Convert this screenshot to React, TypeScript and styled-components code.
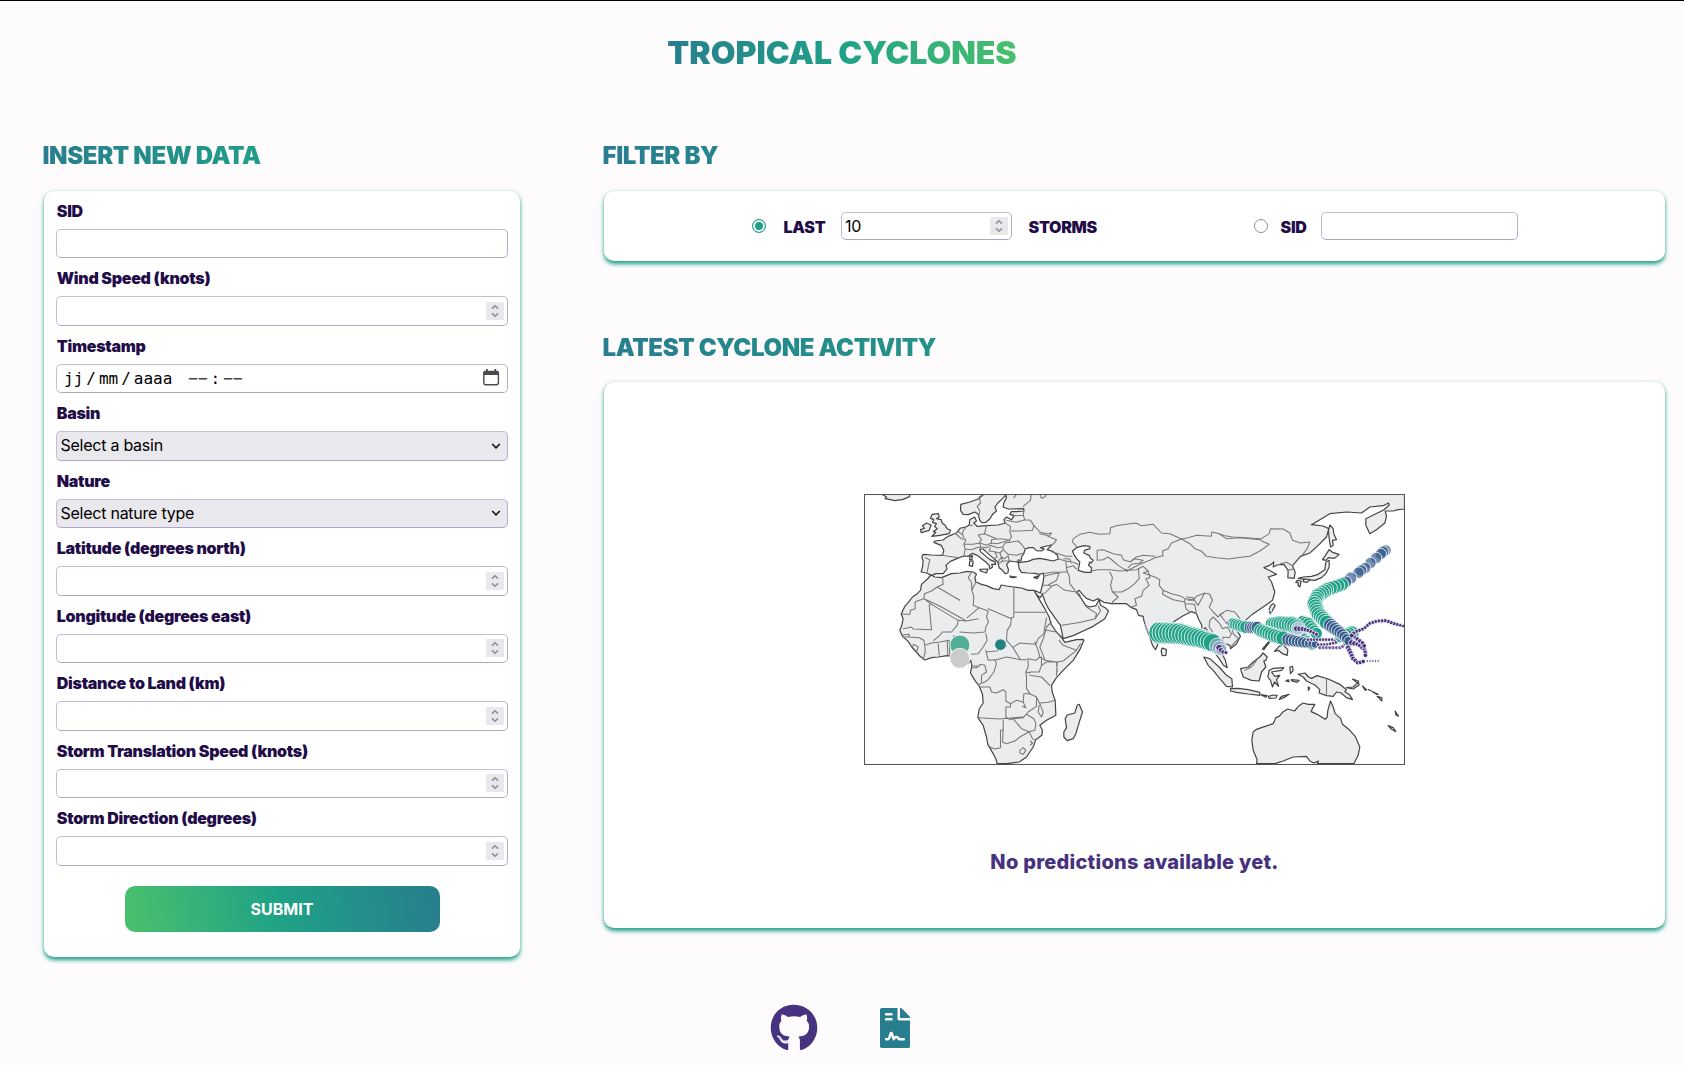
import React from 'react';
import styled, { createGlobalStyle } from 'styled-components';
import { FaGithub, FaFileContract } from 'react-icons/fa';

const GlobalStyle = createGlobalStyle`
  *, *::before, *::after { box-sizing: border-box; }
  body {
    margin: 0;
    background: #fdfbfc;
    color: #1f0c48;
    font-family: Inter, "Liberation Sans", sans-serif;
  }
  h1, h2, p { margin: 0; }
`;

const Page = styled.div`
  height: 1065px;
  overflow: hidden;
  border-top: 1px solid #000;
  display: flex;
  flex-direction: column;
`;

const Header = styled.header`
  display: flex;
  justify-content: center;
  padding-top: 32px;
  height: 138px;
`;

const Title = styled.h1`
  font-size: 32px;
  line-height: 40px;
  height: 40px;
  font-weight: 900;
  letter-spacing: -0.03px;
  white-space: nowrap;
  background: linear-gradient(80deg, #287d8e, #1fa187, #4ac16d);
  background-clip: text;
  -webkit-background-clip: text;
  color: transparent;
`;

const Heading = styled.h2`
  font-size: 24px;
  line-height: 34px;
  font-weight: 900;
  letter-spacing: -0.37px;
  margin-left: -1.5px;
  background: linear-gradient(80deg, #287d8e, #1fa187, #4ac16d);
  background-clip: text;
  -webkit-background-clip: text;
  color: transparent;
`;

const Main = styled.main`
  display: grid;
  grid-template-columns: 476px 1061px;
  column-gap: 84px;
  padding-left: 44px;
  height: 865px;
  align-items: start;
`;

const Column = styled.div`
  display: flex;
  flex-direction: column;
`;

const Card = styled.section<{ $h: number }>`
  height: ${(p) => p.$h}px;
  margin-top: 18px;
  background: #fff;
  border-radius: 10px;
  box-shadow: 0 2.5px 4px 0 #1fa187;
`;

const Form = styled.form`
  display: flex;
  flex-direction: column;
  gap: 8px;
  padding: 7.5px 12px 0;
`;

const Field = styled.label`
  display: flex;
  flex-direction: column;
  gap: 6px;
`;

const Label = styled.span`
  font-size: 16px;
  line-height: 24px;
  font-weight: 900;
  letter-spacing: -0.28px;
  white-space: nowrap;
  padding-left: 0.8px;
`;

const Control = styled.span<{ $w?: number; $fill?: string; $h?: number }>`
  display: flex;
  align-items: center;
  width: ${(p) => (p.$w ? `${p.$w}px` : '100%')};
  height: ${(p) => p.$h ?? 29.5}px;
  padding: 0 3px;
  border: 1px solid #c3bdd8;
  border-right-color: #b3acce;
  border-bottom-color: #aea6ca;
  border-radius: 5px;
  background: ${(p) => p.$fill ?? '#fff'};
  color: #000;
`;

const Input = styled.input`
  appearance: textfield;
  flex: 1;
  min-width: 0;
  padding: 0;
  border: 0;
  outline: 0;
  background: transparent;
  font: 400 16px Inter, "Liberation Sans", sans-serif;
  letter-spacing: -0.3px;
  color: #000;
  &::-webkit-inner-spin-button { appearance: none; }
`;

const Choice = styled.span`
  flex: 1;
  font-size: 16px;
  letter-spacing: -0.25px;
  margin: -1px 0 0 0.5px;
`;

const SpinBox = styled.span`
  display: grid;
  place-items: center;
  width: 18px;
  height: 18px;
  background: #e9e8ed;
`;

const DateText = styled.span`
  flex: 1;
  display: flex;
  align-items: center;
  padding-left: 4px;
  font: 16px "DejaVu Sans Mono", monospace;
  white-space: pre;
`;

const DatePart = styled.span<{ $ml?: number }>`
  margin-left: ${(p) => p.$ml ?? 0}px;
`;

const Dashes = styled(DatePart)`
  color: #444;
`;

const CalendarIcon = styled.svg`
  width: 18px;
  height: 18px;
  margin: -3px 4px 0 0;
`;

const ChevronIcon = styled.svg`
  width: 10px;
  height: 8px;
  margin-right: 3px;
`;

const Submit = styled.button`
  align-self: center;
  width: 315px;
  height: 46px;
  margin-top: 12px;
  border: 0;
  border-radius: 10px;
  background: linear-gradient(80deg, #4ac16d, #1fa187, #287d8e);
  color: #fff;
  font: 700 16px Inter, "Liberation Sans", sans-serif;
  letter-spacing: 0;
`;

const FilterRow = styled.div`
  display: flex;
  align-items: center;
  height: 70px;
  padding-left: 147.5px;
`;

const Radio = styled.span<{ $on?: boolean }>`
  width: 14px;
  height: 14px;
  border-radius: 50%;
  border: 1px solid ${(p) => (p.$on ? '#1fa187' : '#8f8f9d')};
  background: ${(p) => (p.$on ? '#1fa187' : '#fff')};
  box-shadow: inset 0 0 0 2px #fff;
`;

const FilterLabel = styled(Label)<{ $ml: number; $w: number }>`
  margin-left: ${(p) => p.$ml}px;
  width: ${(p) => p.$w}px;
  padding: 1px 0 0;
`;

const MapHeading = styled(Heading)`
  margin-top: 70px;
  margin-bottom: -1px;
`;

const MapPanel = styled.div`
  display: flex;
  flex-direction: column;
  align-items: center;
  padding-top: 112px;
  gap: 85px;
`;

const MapSvg = styled.svg`
  display: block;
  width: 541px;
  height: 271px;
`;

const Empty = styled.p`
  font-size: 20px;
  line-height: 24px;
  font-weight: 800;
  letter-spacing: 0.25px;
  color: #46327e;
`;

const Footer = styled.footer`
  display: flex;
  align-items: center;
  gap: 57px;
  padding-left: 770px;
  height: 48px;
`;

const Spin = () => (
  <SpinBox>
    <svg width="8" height="14" viewBox="0 0 8 14" fill="none" stroke="#8f8e9b" strokeWidth="1.5">
      <path d="M1 4.6 4 1.7 7 4.6M1 9.4l3 2.9 3-2.9" />
    </svg>
  </SpinBox>
);

const Calendar = () => (
  <CalendarIcon viewBox="0 0 18 18">
    <rect x="1.8" y="3.6" width="14.6" height="13.2" rx="2" fill="none" stroke="#4b4b4f" strokeWidth="1.4" />
    <path d="M1.2 7V4.5Q1.2 2.8 3 2.8h12.2q1.8 0 1.8 1.7V7zM4 1h1.8v3H4zM12.4 1h1.8v3h-1.8z" fill="#4b4b4f" />
  </CalendarIcon>
);

const Chevron = () => (
  <ChevronIcon viewBox="0 0 10 8" fill="none" stroke="#111" strokeWidth="1.6">
    <path d="M1.2 2 5 5.8 8.8 2" />
  </ChevronIcon>
);

/* Coastlines and borders are drawn at three map units per pixel. */
const MAINLAND =
  'M372 12 355 26 330 35 303 42 302 60 310 72 325 73 345 65 355 72 360 90 366 97 378 96 390 86 398 72 410 62 405 50 414 38 428 25 438 14 440 22 432 38 430 50 445 56 492 55 492 62 470 64 455 64 450 72 462 78 455 88 440 80 432 88 436 98 415 104 380 106 352 108 342 98 350 92 344 80 330 88 328 104 318 110 300 114 290 128 272 135 258 142 250 149 225 152 222 156 244 165 252 180 248 195 215 194 190 192 186 200 190 212 188 230 184 245 200 248 215 255 228 250 250 250 262 235 258 225 272 213 298 202 312 197 325 198 338 189 352 195 365 205 378 215 388 225 390 236 398 230 396 222 408 222 405 214 390 208 375 195 362 184 360 176 370 176 385 190 402 205 414 215 418 232 428 240 436 250 444 248 446 238 440 222 450 212 470 215 484 210 485 200 492 190 496 176 508 172 520 172 530 181 545 182 553 176 542 172 560 167 575 165 562 178 578 183 592 194 596 206 580 212 560 208 540 204 520 207 505 213 475 217 478 235 485 246 505 248 525 249 540 252 550 248 552 258 550 275 546 290 542 308 523 300 505 300 485 293 462 290 440 287 424 284 418 298 400 295 380 286 365 282 348 275 345 262 350 252 340 245 322 243 300 248 275 250 245 262 225 260 213 254 203 266 185 282 182 300 170 312 158 320 145 337 135 348 124 372 130 385 126 405 120 420 128 438 145 453 156 470 180 497 195 509 215 502 235 500 262 496 275 497 300 530 325 520 333 510 336 526 332 548 345 570 358 587 368 612 370 638 358 656 354 682 370 705 380 740 384 762 400 790 408 805 412 820 440 820 478 815 500 800 520 770 528 748 546 735 548 720 540 705 560 690 588 675 586 630 577 605 575 585 590 562 610 540 640 510 660 478 672 450 670 447 650 448 615 456 606 443 590 425 574 402 568 380 555 355 540 330 524 303 532 315 541 322 548 312 556 335 566 355 585 382 602 405 606 425 610 445 640 436 670 422 700 408 735 385 746 362 736 352 722 345 718 328 708 346 690 350 678 346 664 324 650 306 658 300 668 312 680 324 700 332 715 325 732 336 755 340 800 340 815 352 830 358 836 375 850 378 852 390 860 415 870 440 878 465 887 478 893 465 900 440 915 415 945 392 970 376 995 364 1010 370 1016 386 1026 405 1026 425 1036 412 1046 425 1060 440 1070 475 1068 492 1078 505 1090 524 1102 532 1096 508 1080 478 1084 455 1110 465 1112 475 1130 460 1142 438 1128 415 1118 400 1135 392 1150 396 1180 370 1210 350 1238 330 1245 305 1235 275 1225 260 1250 252 1232 242 1212 232 1230 225 1242 215 1240 230 1252 224 1272 222 1285 240 1284 262 1303 264 1306 246 1298 226 1322 198 1350 188 1375 165 1400 140 1407 115 1390 107 1355 103 1380 88 1410 70 1460 65 1505 68 1530 50 1570 46 1586 38 1588 45 1570 60 1545 72 1518 85 1518 105 1530 130 1550 118 1575 98 1580 78 1576 62 1600 62 1615 58 1634 56 1634 12Z';

const ISLANDS = [
  'M66 12 80 20 76 25 105 31 130 27 149 19 150 12Z',
  'M217 72 236 70 238 80 230 85 244 88 247 98 256 105 262 115 272 120 268 130 240 135 216 138 228 126 220 124 232 115 224 108 230 100 218 96 222 88 212 84Z',
  'M200 98 214 104 208 120 184 127 182 118 194 114 188 106Z',
  'M330 198 338 196 336 208 330 208ZM330 212 340 212 338 228 328 226Z',
  'M360 237 384 236 380 248 362 242ZM450 257 470 260 462 262 452 261ZM522 261 538 256 532 265Z',
  'M907 473 920 478 918 495 907 496 904 482Z',
  'M658 642 668 665 660 690 648 730 640 745 622 751 612 740 612 725 620 712 616 685 622 674 645 668 652 645Z',
  'M1032 500 1050 505 1078 530 1100 555 1116 565 1118 590 1100 588 1080 565 1060 540 1045 525Z',
  'M1112 595 1135 594 1165 598 1200 606 1200 615 1165 611 1130 606 1112 602Z',
  'M1142 535 1165 530 1180 515 1200 500 1210 488 1222 500 1218 510 1212 512 1218 530 1205 545 1198 572 1175 570 1150 560Z',
  'M1228 540 1240 534 1272 532 1265 540 1235 545 1245 558 1260 555 1250 568 1256 588 1244 575 1238 590 1232 570 1224 560Z',
  'M1203 613 1222 616 1218 621ZM1226 618 1240 614 1252 615 1248 623 1228 624ZM1258 627 1265 618 1288 612 1272 622Z',
  'M1278 572 1285 568 1288 574ZM1294 568 1318 570 1312 576 1296 572ZM1290 530 1298 528 1300 540 1292 550ZM1345 590 1350 593 1346 600Z',
  'M1315 552 1335 548 1346 560 1355 564 1372 556 1405 566 1440 582 1460 598 1455 604 1470 614 1478 628 1460 622 1444 608 1430 605 1420 618 1400 616 1378 608 1380 598 1365 584 1340 572 1330 560Z',
  'M1460 592 1480 590 1495 576 1498 584 1480 596ZM1478 566 1496 572 1496 580Z',
  'M1508 587 1520 598 1516 600ZM1525 598 1535 602ZM1538 604 1555 612 1550 612ZM1552 618 1566 622 1566 632ZM1606 662 1616 678 1608 674ZM1585 706 1600 712 1608 724 1594 716Z',
  'M1240 340 1246 346 1238 360 1232 372 1228 356 1234 344ZM1126 410 1140 405 1144 414 1132 420Z',
  'M1208 476 1230 450 1232 452 1212 478ZM1244 483 1258 468 1270 464 1284 478 1282 495 1268 490 1256 480Z',
  'M1222 402 1238 400 1242 420 1248 438 1236 432 1226 418Z',
  'M1315 264 1330 260 1355 258 1375 252 1395 238 1398 215 1408 210 1408 230 1398 250 1385 262 1365 270 1340 268Z',
  'M1312 270 1324 272 1320 290 1314 285 1316 278 1308 276ZM1332 266 1350 268 1342 276 1330 274Z',
  'M1388 208 1395 198 1408 178 1418 186 1438 192 1424 204 1406 202 1398 210Z',
  'M1410 104 1420 115 1422 130 1430 148 1418 150 1420 165 1412 170 1408 145 1406 120Z',
  'M1190 820 1192 808 1180 780 1176 750 1180 725 1190 717 1205 712 1240 700 1248 682 1258 678 1270 664 1284 656 1304 662 1318 646 1330 638 1345 642 1365 642 1358 654 1354 664 1372 672 1396 687 1402 680 1404 660 1412 632 1420 650 1426 670 1442 684 1448 702 1470 720 1486 738 1500 770 1495 795 1482 820 1372 820 1376 812 1362 818 1350 812 1340 798 1300 800 1270 812 1245 820Z',
];

const CASPIAN = 'M638 182 650 172 672 166 690 168 690 175 674 180 672 188 688 195 692 204 700 210 694 218 690 215 686 225 695 232 694 246 676 246 655 240 658 225 660 215 650 205 642 192Z';

const BORDERS = [
  /* Europe */
  'M372 12 358 20 362 38 352 48 360 62 356 80M428 25 440 12M470 12 462 22M514 12 512 30 490 48M492 62 490 75 468 76 455 72M490 75 495 88 470 96 440 90M495 88 512 90 522 105 518 120 480 122 455 122M436 98 452 108 450 125 455 140 448 150 430 146 410 145 392 138 374 130 380 106M328 104 338 106M374 130 355 134 365 148 358 158 340 162 312 162 318 150 310 140 308 125 318 110M300 114 296 125 308 133M286 128 298 140 310 148M312 162 316 176 312 197M316 176 335 178 350 172 362 170 360 158 380 165 395 158 395 148 410 145M395 158 412 160 430 155 448 150M362 170 382 172 392 165M392 165 412 172 428 170 436 158 450 156 448 150M436 158 428 170 432 180 445 192 470 195 492 188M450 156 475 152 488 165 495 176M392 172 388 182 405 184 420 188 428 180M405 184 412 200 402 205M420 188 425 200 414 215M425 200 435 205 445 196M418 218 430 212 450 212M428 212 424 200M445 196 448 210M196 202 210 208 206 225 202 245M248 195 265 198 298 202M484 210 475 208 470 215M522 105 540 125 560 130 575 128M560 12 555 20 545 24 540 12M575 130 565 138',
  /* Turkey, the Caucasus and the Near East */
  'M575 184 600 192 618 198 636 198M596 206 618 212 640 216 655 222M618 212 620 232 640 226 650 236M612 205 630 206 634 218M620 232 622 244 600 246 575 246 550 250M552 258 575 252 598 248 590 270 565 284 548 285M565 284 575 288 556 308 545 310M622 244 628 256 630 280 645 300M575 288 590 282 615 300 645 304 654 306M658 310 662 320M606 405 625 402 650 398 665 395 706 385 710 370 680 350M706 385 722 362 716 348',
  /* Central Asia */
  'M540 130 560 135 575 142 590 148 582 160 570 165M650 168 638 155 640 145 660 132 690 126 718 132 750 130 752 112 770 106 800 102 828 98 845 106 880 102 905 128 930 130 965 146 985 142 1010 135 1055 138 1056 125 1070 128 1095 136 1120 140 1160 142 1200 145 1206 152 1228 162 1200 182 1170 198 1130 202 1108 206 1070 202 1040 198 1024 182 1005 175 990 160 965 146M965 146 935 158 925 175 908 182 910 196 885 202 870 210 840 222 820 232 805 240 800 244M712 210 712 180 730 178 760 190 785 195 790 208 812 215 830 200 850 195 885 198M712 210 730 208 745 200 760 212 775 225 790 235 805 240 780 242 750 238 715 238 694 242M812 215 822 205 850 210 840 218 815 222 805 232M805 240 830 238 850 228 865 242M750 245 758 262 752 285 758 305 785 305 805 295 825 280 838 265 836 235M758 305 775 320 758 335 758 340M865 242 850 248 885 260 900 268 898 285 910 300M865 242 870 262 858 265 868 285 850 300 845 318 825 325 830 345 815 350M910 300 935 310 965 318 975 325 975 335 940 328 908 312 910 300M975 325 1000 328 1010 318 1035 308 1050 312 1055 325M980 320 1000 322 1004 330 985 330M975 335 978 355 992 366M978 340 1004 342 1008 360 1010 370M1004 330 1015 345 1025 325 1035 308M1050 312 1058 330 1048 350 1060 365 1075 380 1082 372 1090 368',
  'M1060 380 1050 390 1048 410 1056 420 1060 450M1060 380 1080 400 1088 415 1102 410 1115 430 1108 442 1090 440 1088 450M1080 372 1095 392 1115 405 1120 430 1136 445 1112 470M1082 372 1100 360 1125 365 1140 385',
  'M1080 132 1100 145 1140 142 1200 148 1228 130 1232 115 1270 116 1290 128 1298 150 1322 158 1350 155 1342 175 1325 198M1298 226 1280 216 1262 220M1284 240 1300 236M1155 540 1175 530 1190 510M1400 566 1400 612',
  /* North and west Africa */
  'M248 260 250 282 232 290 215 302 194 310 192 325 166 334 166 355 152 360 150 372 126 372M192 325 238 346 320 392 355 385M232 290 300 330M335 245 325 262 335 275 336 300 342 318 340 345 358 352 385 362 380 380 386 395M348 275 336 300M462 290 462 380 455 382 455 385 385 355M462 366 560 366M320 392 295 390 292 405 275 425 248 425 240 435 222 450M192 325 215 342 208 344 215 418 160 416 155 410 130 415M215 342 295 390M386 395 378 410 375 425 340 428 300 425M358 352 322 382M455 382 452 405 442 420 440 450 458 470 482 508M560 382 555 410 552 430 535 445 528 462 505 460 480 458 458 472',
  'M130 440 148 440 148 432 128 434M148 440 178 442 192 450 195 465 215 458 240 455M156 470 162 462 175 470 170 485M195 465 196 485 190 508M235 460 238 495M240 455 268 450 270 495M262 450 264 495M280 452 282 435M378 430 382 450 370 470 355 490 335 492M378 480 385 510 405 508 410 520 402 545 385 568 375 575 358 582M440 468 410 482 380 485M482 508 440 500 405 510M482 508 500 508 505 505 528 510 540 500 535 480 525 455M505 510 505 530 498 545 500 560M498 545 510 548M545 500 545 525 538 545 510 545M500 555 500 595 510 610 492 610 490 635M336 526 358 528 360 522 375 525 380 545 365 555 365 575M338 532 352 532 352 526',
  /* East and southern Africa */
  'M362 590 390 590 395 605 410 608 430 598 438 605 438 632 452 640 452 650 438 650 438 680 450 688M490 635 470 630 452 640M490 635 498 652 488 648M510 610 530 620 530 648 505 665 490 682 460 685 450 688M356 682 420 686 460 682 490 680M430 690 430 718 422 720 422 772 405 776 385 768M430 718 428 755 440 760 465 752 480 740 508 724 485 715 460 685M508 724 525 720 528 700 522 685 500 672M508 724 518 745 526 750M480 780 490 772 498 780 490 792 480 788ZM512 752 518 758 512 764M530 620 540 640 550 665 545 680 535 665 538 645M540 638 565 636 586 630M510 555 545 560 570 585M545 525 560 515 590 515 592 545M590 555 592 515 610 512 650 480 610 465 598 450M540 500 556 510 590 515M575 395 560 410 552 440 540 470 556 510M560 420 590 425 606 440M650 480 662 460',
];

type Dot = [number, number, number, string, number];
type Stop = [number, number, number];

const TEAL = '#1fa187';
const BLUE = '#365c8d';
const PURPLE = '#46327e';

/* Places evenly spaced observations along a poly-line of [x, y, radius] stops. */
const track = (stops: Stop[], step: number, fill: string, opacity = 1): Dot[] => {
  const dots: Dot[] = [];
  let carry = 0;
  for (let i = 0; i < stops.length - 1; i += 1) {
    const [x1, y1, r1] = stops[i];
    const [x2, y2, r2] = stops[i + 1];
    const len = Math.hypot(x2 - x1, y2 - y1);
    let d = carry;
    for (; d < len; d += step) {
      const t = d / len;
      dots.push([x1 + (x2 - x1) * t, y1 + (y2 - y1) * t, r1 + (r2 - r1) * t, fill, opacity]);
    }
    carry = d - len;
  }
  return dots;
};

/* Latest observations come first, so the origin of each storm ends up on top. */
const DOTS: Dot[] = [
  ...track([[858, 408, 5], [862, 420, 4]], 5, PURPLE, 0.6),
  ...track([[900, 427, 33], [960, 430, 32], [1020, 444, 29], [1066, 460, 27]], 9.5, TEAL),
  ...track([[1074, 468, 25], [1084, 478, 17]], 7, '#86a5bd', 0.75),
  ...track([[1078, 472, 10], [1086, 484, 7], [1104, 488, 5.5]], 9, PURPLE),
  ...track([[1476, 428, 22], [1440, 440, 18]], 9, TEAL, 0.85),
  ...track([[1320, 436, 18], [1360, 466, 16]], 9, TEAL),
  ...track([[1330, 395, 20], [1345, 400, 20], [1370, 430, 18]], 9, TEAL),
  ...track([[1238, 402, 22], [1262, 400, 24], [1300, 404, 25], [1312, 412, 24]], 8.5, TEAL),
  ...track([[1314, 414, 20], [1318, 415, 15]], 6, '#c0cde0', 0.85),
  ...track([[1310, 415, 9], [1330, 416, 7.5], [1350, 422, 6.5], [1372, 433, 6]], 9, PURPLE),
  ...track([[1120, 400, 18], [1140, 406, 19], [1165, 412, 19]], 8, TEAL),
  ...track([[1172, 411, 19], [1195, 412, 19]], 7, BLUE),
  ...track([[1202, 420, 20], [1240, 434, 22], [1278, 446, 22]], 9, TEAL),
  ...track([[1286, 448, 20], [1330, 456, 17], [1370, 463, 11]], 9, BLUE),
  ...track([[1104, 399, 6], [1098, 396, 5]], 5, PURPLE, 0.5),
  ...track([[1345, 448, 5.5], [1420, 448, 5.5], [1430, 456, 5.5], [1400, 463, 5.5], [1370, 463, 5.5]], 9, PURPLE),
  ...track([[1380, 472, 6], [1445, 472, 6], [1460, 455, 6]], 10, PURPLE, 0.8),
  [1577, 180, 17, BLUE, 0.7],
  [1570, 184, 17, BLUE, 0.7],
  [1563, 191, 17, BLUE, 0.7],
  [1549, 203, 17, BLUE, 0.7],
  [1532, 218, 17, BLUE, 0.7],
  [1516, 233, 17, BLUE, 0.7],
  [1504, 240, 17, BLUE, 0.7],
  [1496, 247, 17, BLUE, 0.7],
  [1473, 263, 18, BLUE, 0.7],
  [1458, 275, 18, BLUE, 0.7],
  ...track([[1446, 282, 20], [1400, 298, 21]], 12, TEAL),
  ...track([[1394, 303, 22], [1372, 318, 22], [1364, 340, 23], [1375, 370, 23], [1402, 398, 22]], 8.5, TEAL),
  ...track([[1412, 405, 21], [1445, 430, 18], [1472, 458, 13]], 9, BLUE),
  ...track([[1475, 457, 9], [1495, 462, 7], [1516, 480, 7], [1517, 500, 7]], 9, PURPLE),
  ...track([[1465, 472, 8], [1480, 505, 7.5], [1495, 518, 7], [1515, 512, 6.5]], 9, PURPLE),
  ...track([[1484, 440, 7], [1508, 458, 7], [1516, 472, 7]], 10, PURPLE),
  ...track([[1523, 512, 3.5], [1562, 512, 3.5]], 8, PURPLE),
  ...track([[1630, 407, 5.5], [1600, 399, 6.5], [1580, 391, 6.5], [1552, 392, 6], [1530, 399, 6], [1512, 415, 6], [1485, 425, 6.5], [1470, 442, 8]], 9.5, PURPLE),
  [1231, 366, 5, PURPLE, 0.7],
];

const WorldMap = () => (
  <MapSvg viewBox="12.5 11 1623 813">
    <rect x="14" y="12.5" width="1620" height="810" fill="#fff" />
    <g strokeLinejoin="round" strokeLinecap="round">
      <g fill="#ebecee" stroke="#444" strokeWidth="3.6">
        <path d={MAINLAND} />
        {ISLANDS.map((d) => (
          <path key={d} d={d} />
        ))}
      </g>
      <g fill="none" stroke="#777" strokeWidth="3.2">
        {BORDERS.map((d) => (
          <path key={d} d={d} />
        ))}
      </g>
      <path d={CASPIAN} fill="#fff" stroke="#444" strokeWidth="3.6" />
    </g>
    <g stroke="#fff" strokeWidth="2.4">
      {DOTS.map(([x, y, r, fill, o], i) => (
        <circle key={i} cx={x} cy={y} r={r} fill={fill} fillOpacity={o} />
      ))}
      <circle cx="300" cy="464" r="30" fill="#52ae99" />
      <circle cx="300" cy="504" r="30" fill="#cbcbcb" />
      <circle cx="422" cy="463" r="17.5" fill="#24817f" />
    </g>
    <rect x="14" y="12.5" width="1620" height="810" fill="none" stroke="#555" strokeWidth="3.2" />
  </MapSvg>
);

const NumberField = ({ label }: { label: string }) => (
  <Field>
    <Label>{label}</Label>
    <Control>
      <Input type="number" />
      <Spin />
    </Control>
  </Field>
);

const SelectField = ({ label, value }: { label: string; value: string }) => (
  <Field>
    <Label>{label}</Label>
    <Control $fill="#e9e8ed">
      <Choice>{value}</Choice>
      <Chevron />
    </Control>
  </Field>
);

export default function App() {
  return (
    <>
      <GlobalStyle />
      <Page>
        <Header>
          <Title>TROPICAL CYCLONES</Title>
        </Header>
        <Main>
          <Column>
            <Heading>INSERT NEW DATA</Heading>
            <Card $h={766}>
              <Form>
                <Field>
                  <Label>SID</Label>
                  <Control>
                    <Input type="text" />
                  </Control>
                </Field>
                <NumberField label="Wind Speed (knots)" />
                <Field>
                  <Label>Timestamp</Label>
                  <Control>
                    <DateText>
                      <DatePart>jj</DatePart>
                      <DatePart $ml={3}>/</DatePart>
                      <DatePart $ml={3}>mm</DatePart>
                      <DatePart $ml={3}>/</DatePart>
                      <DatePart $ml={3}>aaaa</DatePart>
                      <Dashes $ml={16}>−−</Dashes>
                      <DatePart $ml={3}>:</DatePart>
                      <Dashes $ml={3}>−−</Dashes>
                    </DateText>
                    <Calendar />
                  </Control>
                </Field>
                <SelectField label="Basin" value="Select a basin" />
                <SelectField label="Nature" value="Select nature type" />
                <NumberField label="Latitude (degrees north)" />
                <NumberField label="Longitude (degrees east)" />
                <NumberField label="Distance to Land (km)" />
                <NumberField label="Storm Translation Speed (knots)" />
                <NumberField label="Storm Direction (degrees)" />
                <Submit type="button">SUBMIT</Submit>
              </Form>
            </Card>
          </Column>
          <Column>
            <Heading>FILTER BY</Heading>
            <Card $h={70}>
              <FilterRow>
                <Radio $on />
                <FilterLabel $ml={18} $w={57.5}>LAST</FilterLabel>
                <Control $w={171} $h={28}>
                  <Input type="number" defaultValue="10" />
                  <Spin />
                </Control>
                <FilterLabel $ml={16.5} $w={225}>STORMS</FilterLabel>
                <Radio />
                <FilterLabel $ml={13} $w={40}>SID</FilterLabel>
                <Control $w={197} $h={28}>
                  <Input type="text" />
                </Control>
              </FilterRow>
            </Card>
            <MapHeading>LATEST CYCLONE ACTIVITY</MapHeading>
            <Card $h={546}>
              <MapPanel>
                <WorldMap />
                <Empty>No predictions available yet.</Empty>
              </MapPanel>
            </Card>
          </Column>
        </Main>
        <Footer>
          <FaGithub size={48} color="#46327e" />
          <FaFileContract size={40} color="#287d8e" />
        </Footer>
      </Page>
    </>
  );
}
